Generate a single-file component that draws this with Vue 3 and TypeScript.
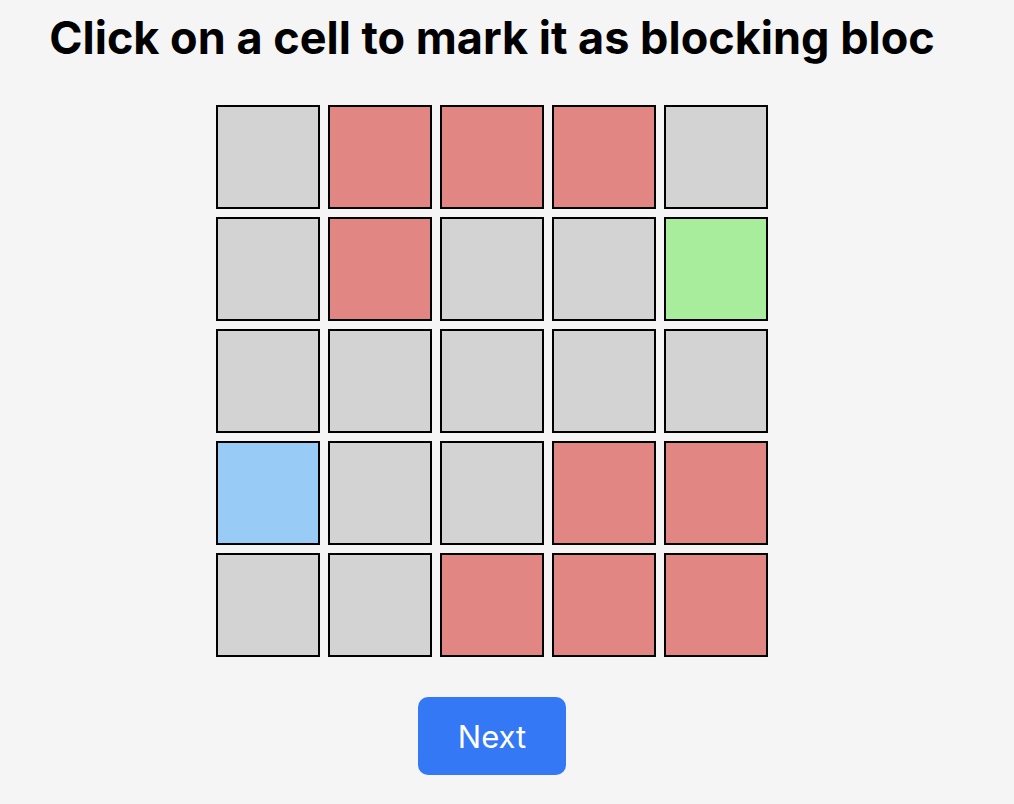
<script setup lang="ts">
import { ref } from 'vue'

type Kind = 'free' | 'block' | 'start' | 'goal'

const codes: Record<string, Kind> = { '.': 'free', '#': 'block', S: 'start', G: 'goal' }
const rows = ['.###.', '.#..G', '.....', 'S..##', '..###']
const grid = ref<Kind[][]>(rows.map((row) => [...row].map((c) => codes[c])))

function toggle(r: number, c: number): void {
  const kind = grid.value[r][c]
  if (kind === 'free') grid.value[r][c] = 'block'
  else if (kind === 'block') grid.value[r][c] = 'free'
}
</script>

<template>
  <main class="page">
    <h1 class="title">Click on a cell to mark it as blocking bloc</h1>
    <div class="grid">
      <template v-for="(row, r) in grid" :key="r">
        <button
          v-for="(kind, c) in row"
          :key="c"
          type="button"
          class="cell"
          :class="kind"
          :aria-label="`Row ${r + 1}, column ${c + 1}: ${kind}`"
          @click="toggle(r, c)"
        ></button>
      </template>
    </div>
    <button type="button" class="next">Next</button>
  </main>
</template>

<style>
body {
  background: #f5f5f5;
}
</style>

<style scoped>
.page {
  display: flex;
  flex-direction: column;
  align-items: center;
  box-sizing: border-box;
  padding: 8px 30px 28px 0;
  font-family: Inter, 'Liberation Sans', sans-serif;
}

.title {
  margin: 0 0 37px;
  font-size: 45px;
  line-height: 60px;
  font-weight: 700;
  color: #000;
  text-align: center;
}

.grid {
  display: grid;
  grid-template-columns: repeat(5, 104px);
  gap: 8px;
}

.cell {
  box-sizing: border-box;
  height: 104px;
  padding: 0;
  border: 2px solid #000;
  border-radius: 0;
  background: #d3d3d3;
  cursor: pointer;
}

.block {
  background: #e18683;
}

.start {
  background: #98cbf6;
}

.goal {
  background: #a8ed9b;
}

.next {
  margin-top: 40px;
  padding: 20px 40px 18px;
  border: 0;
  border-radius: 10px;
  background: #3478f6;
  color: #fff;
  font-family: inherit;
  font-size: 31px;
  line-height: 40px;
  cursor: pointer;
}
</style>
